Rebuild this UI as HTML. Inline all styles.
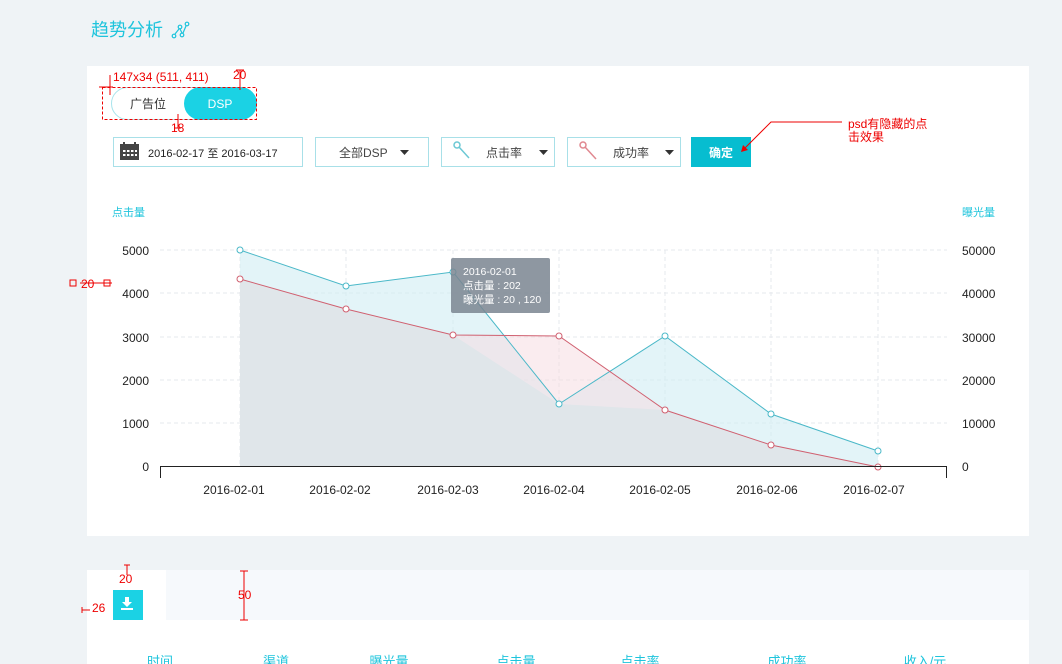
<!DOCTYPE html>
<html><head><meta charset="utf-8"><style>
body{margin:0;width:1062px;height:664px;overflow:hidden;background:#eff3f6;font-family:"Liberation Sans","Noto Sans CJK SC",sans-serif}
svg{position:absolute;left:0;top:0}
text{font-family:"Liberation Sans","Noto Sans CJK SC",sans-serif}
</style></head><body>
<svg width="1062" height="664" viewBox="0 0 1062 664">
<rect x="87" y="66" width="942" height="470" fill="#fff"/>
<rect x="87" y="570" width="942" height="94" fill="#fff"/>
<rect x="166" y="570" width="863" height="50" fill="#f6f9fc"/>
<text x="91" y="36" font-size="18" fill="#1ec4dc">趋势分析</text>
<g stroke="#1ec4dc" fill="none" stroke-width="1.2"><circle cx="174" cy="36" r="1.8"/><circle cx="180" cy="27" r="1.8"/><circle cx="182" cy="35" r="1.8"/><circle cx="187" cy="24" r="1.8"/><path d="M175 34 L179 29 M180 29 L182 33 M183 33 L186 26"/></g>
<!-- toggle -->
<rect x="111.5" y="87.5" width="145" height="32" rx="16" fill="#fff" stroke="#a8e4ec"/>
<rect x="184" y="87" width="73" height="33" rx="16.5" fill="#1bd2e4"/>
<text x="148" y="108" font-size="12" fill="#333" text-anchor="middle">广告位</text>
<text x="220" y="108" font-size="12" fill="#fff" text-anchor="middle">DSP</text>
<g stroke="#e00" fill="none" stroke-dasharray="3,2"><rect x="102.5" y="87.5" width="154" height="32"/></g>
<g stroke="#e00" fill="none"><path d="M99 87H113M110 75V95M240 70V90M236 70H244M178 114V128M175 128H181M80 283H112M70 280v6h6v-6zM104 280v6h6v-6zM127 565V575M124 565H130M244 571V620M240 571H248M240 620H248M82 607V613M82 610H90"/></g>
<text x="113" y="81" font-size="12" fill="#e00">147x34 (511, 411)</text>
<text x="233" y="79" font-size="12" fill="#e00">20</text>
<text x="171" y="132" font-size="12" fill="#e00">18</text>
<text x="81" y="288" font-size="12" fill="#e00">20</text>
<text x="119" y="583" font-size="12" fill="#e00">20</text>
<text x="92" y="612" font-size="12" fill="#e00">26</text>
<text x="238" y="599" font-size="12" fill="#e00">50</text>
<!-- filters -->
<rect x="113.5" y="137.5" width="189" height="29" fill="#fff" stroke="#a8e0e8"/>
<g fill="#444"><rect x="120" y="144" width="19" height="16"/><rect x="123" y="142" width="2" height="4"/><rect x="134" y="142" width="2" height="4"/></g>
<g fill="#fff"><rect x="123" y="150" width="2.5" height="2"/><rect x="127" y="150" width="2.5" height="2"/><rect x="131" y="150" width="2.5" height="2"/><rect x="123" y="154" width="2.5" height="2"/><rect x="127" y="154" width="2.5" height="2"/><rect x="131" y="154" width="2.5" height="2"/><rect x="135" y="150" width="2" height="2"/><rect x="135" y="154" width="2" height="2"/></g>
<text x="148" y="157" font-size="11" fill="#222" font-family="Liberation Mono">2016-02-17 至 2016-03-17</text>
<rect x="315.5" y="137.5" width="113" height="29" fill="#fff" stroke="#a8e0e8"/>
<text x="339" y="157" font-size="12" fill="#444">全部DSP</text><path d="M400 150h9l-4.5 5z" fill="#333"/>
<rect x="441.5" y="137.5" width="113" height="29" fill="#fff" stroke="#a8e0e8"/>
<g stroke="#6cc8d4" stroke-width="1.5" fill="none"><circle cx="457" cy="145" r="3"/><path d="M459 147L469 158"/></g>
<text x="486" y="157" font-size="12" fill="#444">点击率</text><path d="M539 150h9l-4.5 5z" fill="#333"/>
<rect x="567.5" y="137.5" width="113" height="29" fill="#fff" stroke="#a8e0e8"/>
<g stroke="#e08890" stroke-width="1.5" fill="none"><circle cx="583" cy="145" r="3"/><path d="M585 147L596 159"/></g>
<text x="613" y="157" font-size="12" fill="#444">成功率</text><path d="M665 150h9l-4.5 5z" fill="#333"/>
<rect x="691" y="137" width="60" height="30" fill="#07bdd0"/>
<text x="721" y="157" font-size="12" fill="#fff" font-weight="bold" text-anchor="middle">确定</text>
<path d="M842 122H771L743 150" stroke="#e00" fill="none"/><path d="M741 152l2-7 5 5z" fill="#e00"/>
<text x="848" y="128" font-size="12" fill="#e00">psd有隐藏的点</text>
<text x="848" y="141" font-size="12" fill="#e00">击效果</text>
<!-- chart -->
<text x="112" y="216" font-size="11" fill="#1ec4dc">点击量</text>
<text x="962" y="216" font-size="11" fill="#1ec4dc">曝光量</text>
<g stroke="#e6e9ec" stroke-dasharray="4,3"><path d="M160 250H947M160 293H947M160 337H947M160 380H947M160 423H947"/><path d="M240 250V466M346 250V466M453 250V466M559 250V466M665 250V466M771 250V466M878 250V466"/></g>
<path d="M240 250L346 286L453 272L559 404L665 336L771 414L878 451L878 466L240 466Z" fill="#d4eef4" opacity=".65"/>
<path d="M240 279L346 309L453 335L559 336L665 410L771 445L878 467L878 466L240 466Z" fill="#f6dde2" opacity=".55"/>
<path d="M240 279L346 309L453 335L559 404L665 410L771 445L878 467L878 466L240 466Z" fill="#e0e6ea"/>
<path d="M240 250L346 286L453 272L559 404L665 336L771 414L878 451" stroke="#4ab8c8" fill="none"/>
<path d="M240 279L346 309L453 335L559 336L665 410L771 445L878 467" stroke="#d06070" fill="none"/>
<g fill="#fff" stroke="#4ab8c8"><circle cx="240" cy="250" r="3"/><circle cx="346" cy="286" r="3"/><circle cx="453" cy="272" r="3"/><circle cx="559" cy="404" r="3"/><circle cx="665" cy="336" r="3"/><circle cx="771" cy="414" r="3"/><circle cx="878" cy="451" r="3"/></g>
<g fill="#fff" stroke="#d06070"><circle cx="240" cy="279" r="3"/><circle cx="346" cy="309" r="3"/><circle cx="453" cy="335" r="3"/><circle cx="559" cy="336" r="3"/><circle cx="665" cy="410" r="3"/><circle cx="771" cy="445" r="3"/><circle cx="878" cy="467" r="3"/></g>
<path d="M160 466.5H947M160.5 466V478M946.5 466V478" stroke="#222" fill="none"/>
<g font-size="12" fill="#222" text-anchor="end"><text x="149" y="255">5000</text><text x="149" y="298">4000</text><text x="149" y="342">3000</text><text x="149" y="385">2000</text><text x="149" y="428">1000</text><text x="149" y="471">0</text></g>
<g font-size="12" fill="#222"><text x="962" y="255">50000</text><text x="962" y="298">40000</text><text x="962" y="342">30000</text><text x="962" y="385">20000</text><text x="962" y="428">10000</text><text x="962" y="471">0</text></g>
<g font-size="12" fill="#222" text-anchor="middle"><text x="234" y="494">2016-02-01</text><text x="340" y="494">2016-02-02</text><text x="448" y="494">2016-02-03</text><text x="554" y="494">2016-02-04</text><text x="660" y="494">2016-02-05</text><text x="767" y="494">2016-02-06</text><text x="874" y="494">2016-02-07</text></g>
<rect x="451" y="258" width="99" height="55" rx="2" fill="#7a8590" opacity=".85"/>
<g font-size="10.5" fill="#fff"><text x="463" y="275">2016-02-01</text><text x="463" y="289">点击量 : 202</text><text x="463" y="303">曝光量 : 20 , 120</text></g>
<!-- download -->
<rect x="113" y="590" width="30" height="30" fill="#1bd2e4"/>
<path d="M125 597h4v5h3l-5 5-5-5h3z" fill="#fff"/><rect x="121" y="608" width="12" height="2" fill="#fff"/>
<g font-size="13" fill="#1ec4dc" text-anchor="middle"><text x="160" y="666">时间</text><text x="276" y="666">渠道</text><text x="389" y="666">曝光量</text><text x="516" y="666">点击量</text><text x="640" y="666">点击率</text><text x="787" y="666">成功率</text><text x="925" y="666">收入/元</text></g>
</svg>
</body></html>
